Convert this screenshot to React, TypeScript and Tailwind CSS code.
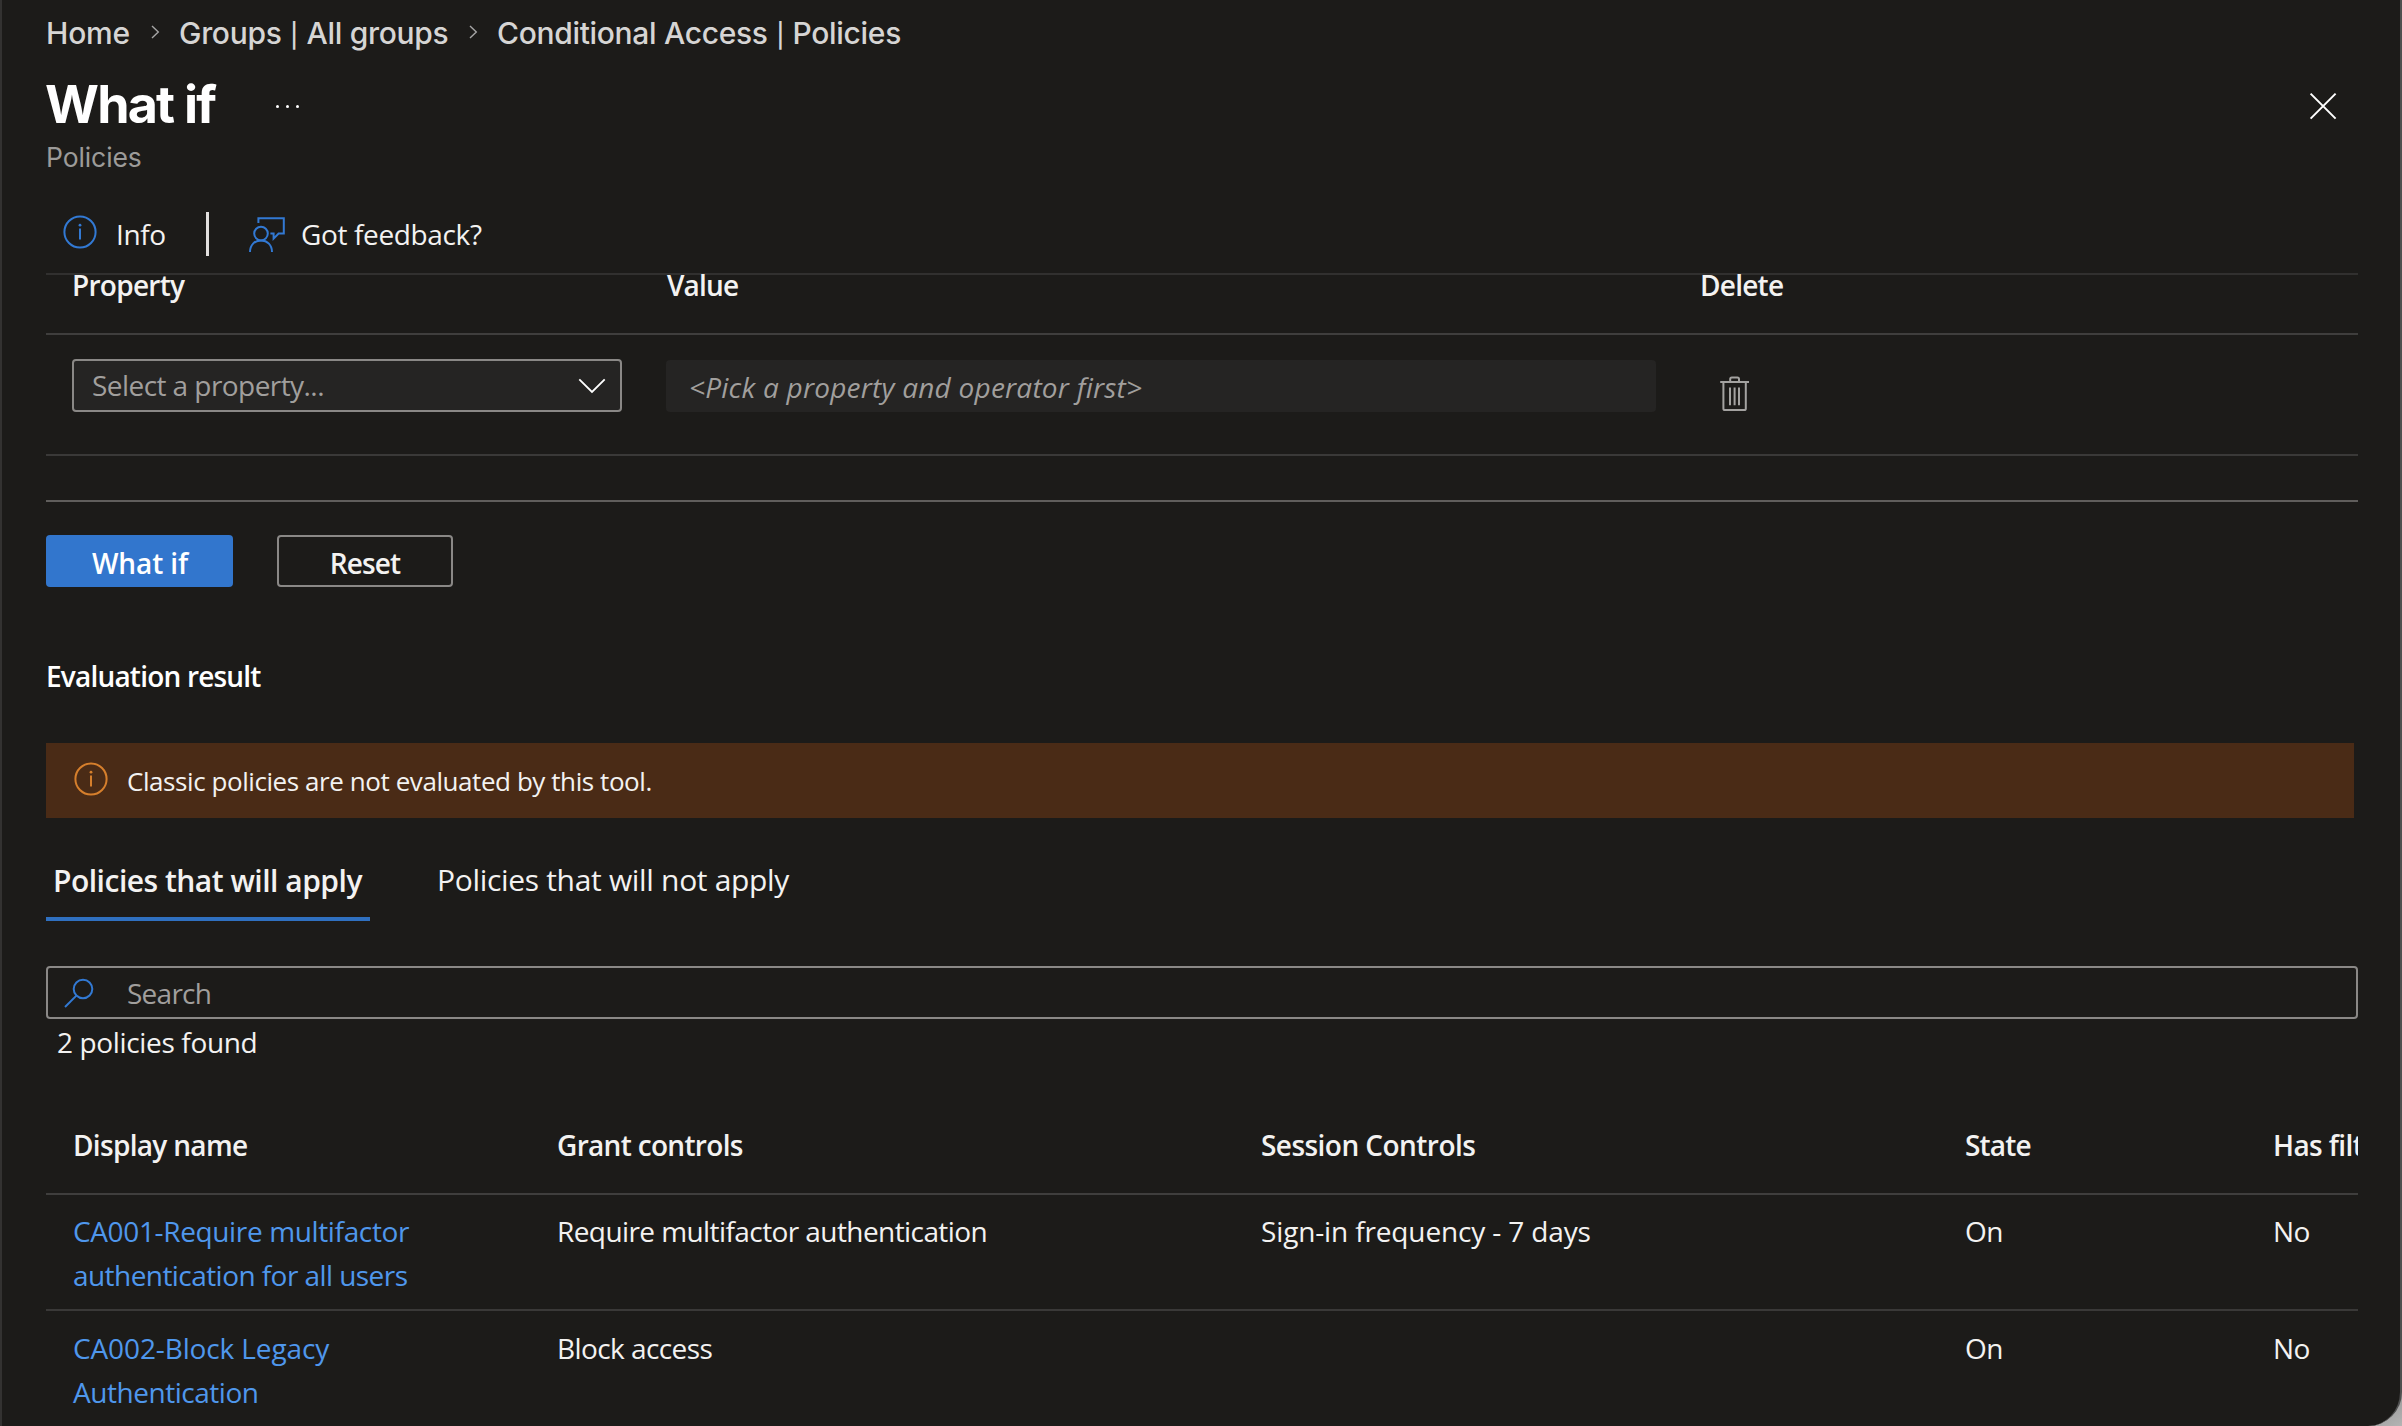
import type { ReactNode } from "react";

type Policy = {
  name: ReactNode;
  grant: string;
  session: string;
  state: string;
  filter: string;
};

const policies: Policy[] = [
  {
    name: (
      <>
        <span className="tracking-[-0.36px]">CA001-Require multifactor</span>
        <br />
        <span className="tracking-[-0.56px]">authentication for all users</span>
      </>
    ),
    grant: "Require multifactor authentication",
    session: "Sign-in frequency - 7 days",
    state: "On",
    filter: "No",
  },
  {
    name: (
      <>
        <span className="tracking-[-0.12px]">CA002-Block Legacy</span>
        <br />
        <span className="tracking-[-0.46px]">Authentication</span>
      </>
    ),
    grant: "Block access",
    session: "",
    state: "On",
    filter: "No",
  },
];

function InfoIcon({ className }: { className: string }) {
  return (
    <svg width="34" height="34" viewBox="0 0 34 34" fill="none" className={className}>
      <circle cx="17" cy="17" r="15.6" stroke="currentColor" strokeWidth="2" />
      <path d="M17 13.6v11" stroke="currentColor" strokeWidth="2" />
      <circle cx="17" cy="10.2" r="1.4" fill="currentColor" />
    </svg>
  );
}

function Crumb() {
  return (
    <svg width="9" height="14" viewBox="0 0 9 14" fill="none" className="mt-[-2px] text-[#a6a6a6]">
      <path d="M1 1l6.3 6L1 13" stroke="currentColor" strokeWidth="1.4" />
    </svg>
  );
}

function Bar() {
  return <span className="mx-[0.8px] text-[24px]">|</span>;
}

function FeedbackIcon() {
  return (
    <svg width="37" height="37" viewBox="0 0 37 37" fill="none" stroke="#3279d3" strokeWidth="2">
      <path d="M10.4 7V2.2H35.8V17.6H30.6L25.6 22.6V17.6H22.4" />
      <circle cx="13" cy="17.6" r="6.8" />
      <path d="M2 36c0-7 4.6-11.6 11-11.6S24 29 24 36" />
    </svg>
  );
}

function TrashIcon() {
  return (
    <svg width="30" height="36" viewBox="0 0 30 36" fill="none" stroke="#a3a2a0" strokeWidth="2">
      <path d="M.2 6H29" />
      <path d="M10.2 6V3q0-1.6 1.6-1.6h5.6Q19 1.4 19 3v3" />
      <path d="M3.4 6v26.4q0 1.6 1.6 1.6h19.2q1.6 0 1.6-1.6V6" />
      <path d="M10 11.6v17.6M14.6 11.6v17.6M19 11.6v17.6" />
    </svg>
  );
}

export default function App() {
  return (
    <div className="h-[1426px] w-[2402px] overflow-hidden bg-linear-to-br from-[#8a8a8a] from-98% to-[#b4b4b4]">
      <div className="flex h-[1426px] w-[2402px] flex-col overflow-hidden rounded-br-[34px] border-r-2 border-l-2 border-r-[#4f4f4f] border-l-[#333231] bg-[#1c1b19] pl-[44px] font-['Open_Sans','Noto_Sans',sans-serif] text-[28px] text-[#f3f2f1]">
        {/* header */}
        <nav className="flex h-[66px] items-center font-['Inter',sans-serif] text-[30px] font-medium text-[#d6d5d4]">
          <span className="w-[105px] pt-px tracking-[-0.2px]">Home</span>
          <Crumb />
          <span className="ml-[19px] w-[290px] pt-px tracking-[-0.3px] whitespace-nowrap">
            Groups <Bar /> All groups
          </span>
          <Crumb />
          <span className="ml-[19px] pt-px tracking-[-0.32px] whitespace-nowrap">
            Conditional Access <Bar /> Policies
          </span>
        </nav>
        <div className="flex h-[76px] items-center font-['Inter',sans-serif]">
          <h1 className="ml-[-1px] w-[231px] pt-[2px] text-[52px] font-bold tracking-[-1.8px] whitespace-nowrap text-white">What if</h1>
          <div className="flex gap-[7px] pt-[4px]">
            <i className="h-[3px] w-[3px] rounded-full bg-white" />
            <i className="h-[3px] w-[3px] rounded-full bg-white" />
            <i className="h-[3px] w-[3px] rounded-full bg-white" />
          </div>
          <svg width="28" height="28" viewBox="0 0 28 28" fill="none" className="mt-[4px] mr-[63px] ml-auto">
            <path d="M1.6 1.6l25 25M26.6 1.6l-25 25" stroke="#fff" strokeWidth="2" />
          </svg>
        </div>
        <p className="flex h-[31px] items-center pt-px font-['Inter',sans-serif] text-[26.5px] tracking-[-0.1px] text-[#9c9b99]">Policies</p>

        {/* toolbar */}
        <div className="mt-[22px] mr-[42px] flex h-[80px] items-center border-b-2 border-[#31302f] pl-[17px]">
          <InfoIcon className="mt-[-4px] text-[#3279d3]" />
          <span className="ml-[19px] w-[90px] tracking-[-0.4px]">Info</span>
          <div className="h-[44px] w-[3px] bg-[#e1dfdd]" />
          <div className="ml-[39px]">
            <FeedbackIcon />
          </div>
          <span className="ml-[16px] tracking-[-0.36px]">Got feedback?</span>
        </div>

        {/* property picker */}
        <div className="mr-[42px] flex h-[60px] border-b-2 border-[#3f3e3d] pl-[26px] leading-[21px] font-semibold">
          <span className="w-[595px] tracking-[-0.72px]">Property</span>
          <span className="w-[1033px] tracking-[-0.85px]">Value</span>
          <span className="tracking-[-0.75px]">Delete</span>
        </div>
        <div className="mr-[42px] flex h-[121px] items-start border-b-2 border-[#3a3938] pt-[24px] pl-[26px]">
          <div className="flex h-[53px] w-[550px] items-center justify-between rounded-[4px] border-2 border-[#8a8886] bg-[#252423] pr-[14px] pl-[18px] text-[#a19f9d]">
            <span className="pb-px tracking-[-0.56px]">Select a property...</span>
            <svg width="28" height="16" viewBox="0 0 28 16" fill="none">
              <path d="M1.3 1.3L14 14 26.7 1.3" stroke="#fff" strokeWidth="1.8" />
            </svg>
          </div>
          <div className="mt-px ml-[44px] flex h-[52px] w-[990px] items-center rounded-[4px] bg-[#252423] pt-[2px] pl-[23px] text-[#a19f9d] italic">
            <span className="tracking-[0.23px]">&lt;Pick a property and operator first&gt;</span>
          </div>
          <div className="mt-[17px] ml-[64px]">
            <TrashIcon />
          </div>
        </div>

        <div className="mt-[44px] mr-[42px] h-[2px] shrink-0 bg-[#605e5c]" />

        <div className="mt-[33px] flex h-[52px] shrink-0 gap-[44px] font-semibold">
          <button className="flex h-[52px] w-[187px] items-center justify-center rounded-[4px] bg-[#3276cd] pt-[3px] pl-px tracking-[-0.1px] text-white">What if</button>
          <button className="flex h-[52px] w-[176px] items-center justify-center rounded-[4px] border-2 border-[#8a8886] pt-[3px] tracking-[-0.85px]">Reset</button>
        </div>

        <h2 className="mt-[69px] h-[40px] shrink-0 leading-[41px] font-semibold tracking-[-0.8px] text-white">Evaluation result</h2>

        <div className="mt-[47px] flex h-[75px] w-[2308px] shrink-0 items-center bg-[#4a2b16] pl-[28px] text-[26px]">
          <InfoIcon className="mt-[-4px] text-[#d67f2c]" />
          <span className="ml-[19px] pt-[2px] tracking-[-0.43px]">Classic policies are not evaluated by this tool.</span>
        </div>

        {/* tabs */}
        <div className="mt-[26px] flex h-[77px] shrink-0 text-[30px] whitespace-nowrap">
          <div className="w-[324px] border-b-4 border-[#2f70c0] pl-[7px] leading-[74px] font-semibold tracking-[-0.5px]">Policies that will apply</div>
          <div className="ml-[67px] leading-[72px] tracking-[-0.32px]">Policies that will not apply</div>
        </div>

        <div className="mt-[45px] mr-[42px] flex h-[53px] shrink-0 items-center rounded-[4px] border-2 border-[#8a8886] pl-[16px]">
          <svg width="30" height="30" viewBox="0 0 30 30" fill="none" stroke="#3279d3" strokeWidth="2">
            <circle cx="19" cy="11" r="9.3" />
            <path d="M12.4 17.6L1 29" />
          </svg>
          <span className="ml-[33px] tracking-[-0.75px] text-[#a19f9d]">Search</span>
        </div>
        <p className="flex h-[46px] shrink-0 items-center pl-[11px] tracking-[-0.35px]">2 policies found</p>

        {/* results, last column runs past the right edge */}
        <div className="mt-[31px] mr-[42px] shrink-0 overflow-hidden whitespace-nowrap">
          <div className="flex h-[99px] border-b-2 border-[#3f3e3d] pl-[27px] leading-[99px] font-semibold">
            <span className="w-[484px] shrink-0 tracking-[-0.68px]">Display name</span>
            <span className="w-[704px] shrink-0 tracking-[-0.68px]">Grant controls</span>
            <span className="w-[704px] shrink-0 tracking-[-0.55px]">Session Controls</span>
            <span className="w-[308px] shrink-0 tracking-[-0.8px]">State</span>
            <span className="shrink-0 tracking-[-0.6px]">Has filters</span>
          </div>
          {policies.map((p, i) => (
            <div key={i} className="flex h-[116px] border-b-2 border-[#3a3938] pt-[14px] pl-[27px] leading-[44px] last:h-[115px] last:border-0 last:pt-[15px]">
              <span className="w-[484px] shrink-0 text-[#4f97ec]">{p.name}</span>
              <span className="w-[704px] shrink-0 tracking-[-0.58px]">{p.grant}</span>
              <span className="w-[704px] shrink-0 tracking-[-0.14px]">{p.session}</span>
              <span className="w-[308px] shrink-0 tracking-[-0.6px]">{p.state}</span>
              <span className="shrink-0 tracking-[-0.5px]">{p.filter}</span>
            </div>
          ))}
        </div>
      </div>
    </div>
  );
}
